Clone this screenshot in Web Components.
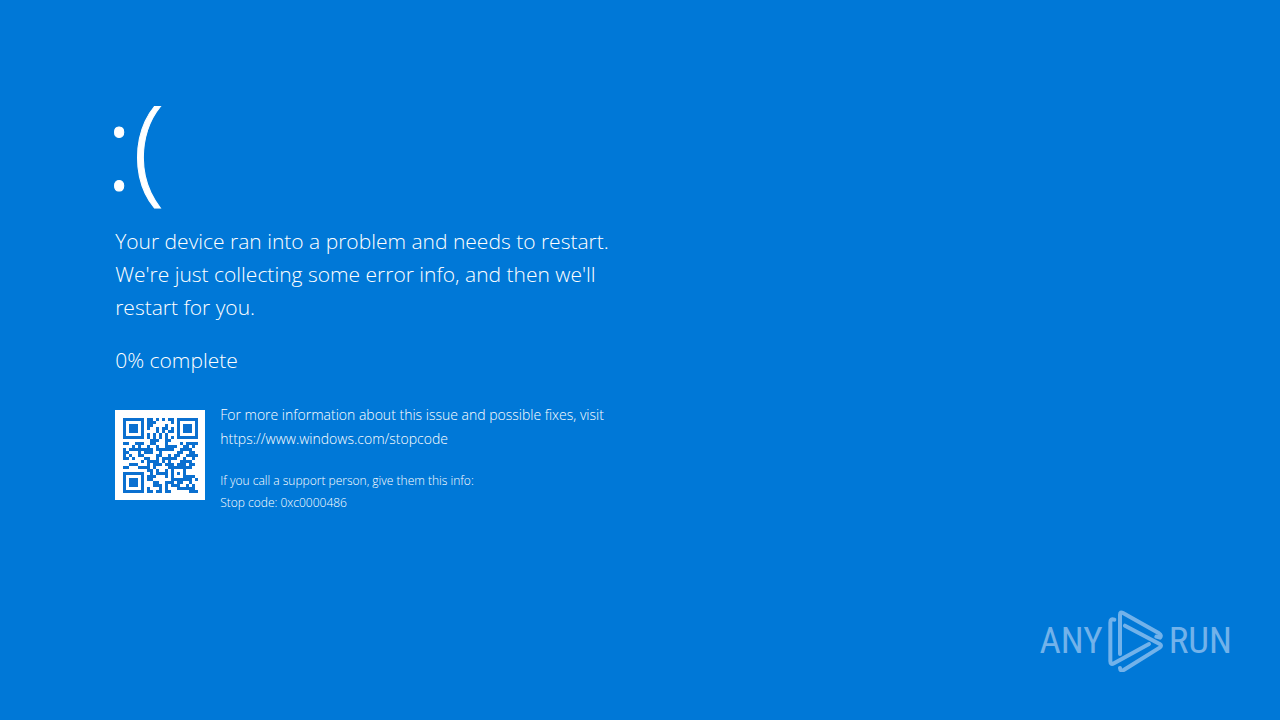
<!DOCTYPE html>
<html lang="en">
<head>
<meta charset="utf-8">
<title>Stop error</title>
<style>
  html, body { margin: 0; min-height: 100%; background: #0078d7; }
  body { color: #fff; font-family: "Open Sans", "Noto Sans", sans-serif; font-weight: 300; }
</style>
</head>
<body>
<stop-screen>
  <sad-face slot="face">:(</sad-face>
  <stop-message slot="message">
    <span>Your device ran into a problem and needs to restart.<br>We're just collecting some error info, and then we'll<br>restart for you.</span>
    <span slot="progress">0% complete</span>
  </stop-message>
  <support-info slot="support" url="https://www.windows.com/stopcode" code="0xc0000486">For more information about this issue and possible fixes, visit</support-info>
  <run-logo slot="brand"></run-logo>
</stop-screen>

<script>
class Base extends HTMLElement {
  constructor() {
    super();
    this.attachShadow({ mode: "open" });
  }
  connectedCallback() { this.shadowRoot.innerHTML = this.render(); }
}

customElements.define("stop-screen", class extends Base {
  render() {
    return `<style>
      :host { display: flex; flex-direction: column; justify-content: space-between; box-sizing: border-box; min-height: 100vh; padding: 70px 48px 48px 9%; }
      main { display: flex; flex-direction: column; align-items: flex-start; }
      footer { display: flex; justify-content: flex-end; }
    </style>
    <main><slot name="face"></slot><slot name="message"></slot><slot name="support"></slot></main>
    <footer><slot name="brand"></slot></footer>`;
  }
});

customElements.define("sad-face", class extends Base {
  render() {
    return `<style>
      :host { display: block; font-size: 116px; line-height: 150px; margin: 0 0 5px -10px; -webkit-text-stroke: 1px #fff; }
    </style><slot></slot>`;
  }
});

customElements.define("stop-message", class extends Base {
  render() {
    return `<style>
      :host { display: block; font-size: 21px; line-height: 33px; }
      p { margin: 0 0 20px; white-space: nowrap; }
    </style>
    <p><slot></slot></p><p><slot name="progress"></slot></p>`;
  }
});

customElements.define("support-info", class extends Base {
  render() {
    const url = this.getAttribute("url");
    return `<style>
      :host { display: flex; gap: 15px; margin-top: 13px; }
      p { margin: 0; white-space: nowrap; }
      .more { font-size: 14px; line-height: 24px; margin: -7px 0 19px; }
      .call { font-size: 12px; line-height: 22px; }
      a { color: inherit; text-decoration: none; }
    </style>
    <qr-code value="${url}"></qr-code>
    <div>
      <p class="more"><slot></slot><br><a href="${url}">${url}</a></p>
      <p class="call">If you call a support person, give them this info:<br>Stop code: ${this.getAttribute("code")}</p>
    </div>`;
  }
});

/* Version 2-L QR symbol: 25 modules a side, 34 data and 10 correction bytes. */
function qrModules(text) {
  const N = 25;
  const bits = [];
  const put = (v, n) => { while (n--) bits.push(v >> n & 1); };
  const bytes = new TextEncoder().encode(text);
  put(4, 4); put(bytes.length, 8);
  bytes.forEach(b => put(b, 8));
  put(0, Math.min(4, 272 - bits.length));
  while (bits.length % 8) bits.push(0);
  for (let pad = 236; bits.length < 272; pad ^= 253) put(pad, 8);
  const data = [];
  for (let i = 0; i < 272; i += 8) data.push(parseInt(bits.slice(i, i + 8).join(""), 2));

  const mul = (a, b) => {
    let r = 0;
    for (; b; b >>= 1) { if (b & 1) r ^= a; a <<= 1; if (a & 256) a ^= 285; }
    return r;
  };
  let gen = [1];
  for (let i = 0, root = 1; i < 10; i++, root = mul(root, 2)) {
    const next = [...gen, 0];
    gen.forEach((g, k) => next[k + 1] ^= mul(g, root));
    gen = next;
  }
  const rem = [...data, ...Array(10).fill(0)];
  for (let i = 0; i < 34; i++) {
    const f = rem[i];
    gen.forEach((g, k) => rem[i + k] ^= mul(g, f));
  }
  rem.slice(34).forEach(b => put(b, 8));

  const m = Array.from({ length: N }, () => Array(N).fill(null));
  const finder = (r0, c0) => {
    for (let r = -1; r < 8; r++) for (let c = -1; c < 8; c++) {
      if (m[r0 + r] === undefined || c0 + c < 0 || c0 + c >= N) continue;
      const d = Math.max(Math.abs(r - 3), Math.abs(c - 3));
      m[r0 + r][c0 + c] = d !== 2 && d !== 4 ? 1 : 0;
    }
  };
  finder(0, 0); finder(0, N - 7); finder(N - 7, 0);
  for (let r = -2; r < 3; r++) for (let c = -2; c < 3; c++)
    m[18 + r][18 + c] = Math.max(Math.abs(r), Math.abs(c)) !== 1 ? 1 : 0;
  for (let i = 8; i < N - 8; i++) m[6][i] = m[i][6] = 1 - i % 2;
  const fmt = [..."110011000101111"].map(Number);
  const colA = [0, 1, 2, 3, 4, 5, 7, 8];
  colA.forEach((c, i) => m[8][c] = fmt[i]);
  [7, 5, 4, 3, 2, 1, 0].forEach((r, i) => m[r][8] = fmt[8 + i]);
  for (let i = 0; i < 7; i++) m[N - 1 - i][8] = fmt[i];
  for (let i = 0; i < 8; i++) m[8][N - 8 + i] = fmt[7 + i];
  m[N - 8][8] = 1;

  let k = 0, up = true;
  for (let c = N - 1; c > 0; c -= 2) {
    if (c === 6) c--;
    for (let i = 0; i < N; i++) {
      const r = up ? N - 1 - i : i;
      for (const x of [c, c - 1]) {
        if (m[r][x] !== null) continue;
        const mask = (Math.floor(r / 2) + Math.floor(x / 3)) % 2 === 0 ? 1 : 0;
        m[r][x] = (bits[k++] || 0) ^ mask;
      }
    }
    up = !up;
  }
  return m;
}

customElements.define("qr-code", class extends Base {
  render() {
    let d = "";
    qrModules(this.getAttribute("value")).forEach((row, r) =>
      row.forEach((on, c) => { if (on) d += `M${c} ${r}h1v1h-1z`; }));
    return `<style>
      :host { display: block; flex: none; box-sizing: border-box; width: 90px; height: 90px; padding: 8px 7px 7px 8px; background: #fff; }
      svg { display: block; width: 100%; height: 100%; }
    </style>
    <svg viewBox="0 0 25 25" shape-rendering="crispEdges" role="img" aria-label="QR code"><path d="${d}" fill="#0b70d0"/></svg>`;
  }
});

customElements.define("run-logo", class extends Base {
  render() {
    return `<style>
      :host { display: flex; align-items: center; gap: 5px; color: #72b2ea; font: 400 37px/62px "Roboto Condensed", "Liberation Sans Narrow", "Roboto", sans-serif; }
      svg { display: block; width: 56px; height: 62px; }
    </style>
    <span>ANY</span>
    <svg viewBox="239 28 168 186" fill="none" stroke="#72b2ea" stroke-width="12" stroke-linecap="round" stroke-linejoin="round" aria-hidden="true">
      <path d="M275 160V42q0-10 9-5l108 61q9 6 3 13l-11-3"/>
      <path d="M290 75l104 55q8 5 0 11l-108 67q-10 5-11-6"/>
      <path d="M258 57q-12-5-12 9v116q0 12 11 6l105-58"/>
    </svg>
    <span>RUN</span>`;
  }
});
</script>
</body>
</html>
